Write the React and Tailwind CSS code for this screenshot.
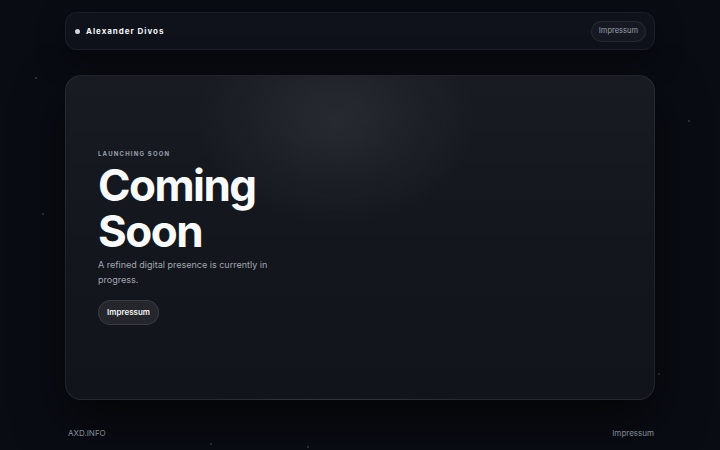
export default function App() {
  const specks = [
    [35, 77], [307, 446], [658, 373], [42, 213], [688, 120], [210, 443],
  ]
  return (
    <div className="relative w-[720px] h-[450px] overflow-hidden bg-[#090c13] text-white" style={{ fontFamily: 'Inter, "Noto Sans", sans-serif' }}>
      {specks.map(([x, y], i) => (
        <span key={i} className="absolute w-[2px] h-[2px] rounded-full bg-white/20" style={{ left: x, top: y }} />
      ))}

      <div className="relative flex flex-col px-[65px] pt-3">
        {/* Kopfzeile */}
        <header className="h-[38px] rounded-xl border border-white/[0.06] bg-[#0f121a] flex items-center justify-between pl-[9px] pr-2 shadow-[0_10px_30px_rgba(0,0,0,0.4)]">
          <div className="flex items-center gap-[6px]">
            <span className="w-[5px] h-[5px] rounded-full bg-gray-300" />
            <span className="text-[8px] font-bold tracking-[0.12em] text-gray-100">Alexander Divos</span>
          </div>
          <button className="h-[21px] px-[7px] rounded-full border border-white/[0.07] bg-white/[0.03] text-[7.5px] text-gray-400">
            Impressum
          </button>
        </header>

        {/* Hauptkarte */}
        <main className="relative mt-[25px] h-[325px] rounded-2xl border border-white/[0.07] overflow-hidden shadow-[0_20px_50px_rgba(0,0,0,0.6)]"
          style={{ background: 'radial-gradient(ellipse 200px 150px at 270px 45px, rgba(255,255,255,0.07), transparent 70%), linear-gradient(180deg, #181b22 0%, #13161d 55%, #11141b 100%)' }}>
          <div className="pl-8 pt-[74px]">
            <p className="text-[6px] leading-[8px] font-bold tracking-[0.2em] text-gray-400">LAUNCHING SOON</p>
            <h1 className="mt-[4px] text-[44px] leading-[46px] font-bold tracking-[-0.035em] text-gray-50">
              <span className="block">Coming</span>
              <span className="block">Soon</span>
            </h1>
            <p className="mt-[3px] w-[172px] text-[9px] leading-[15px] text-[#a3a7b0]">
              A refined digital presence is currently in progress.
            </p>
            <div className="mt-[10px]">
              <button className="h-[25px] px-[8px] rounded-full border border-white/10 bg-[#24262c] text-[8px] font-semibold text-gray-100">
                Impressum
              </button>
            </div>
          </div>
        </main>

        {/* Fußzeile */}
        <footer className="mt-[27px] flex items-center justify-between pl-[3px] pr-[1px] text-[8px] text-gray-400">
          <span>AXD.INFO</span>
          <span>Impressum</span>
        </footer>
      </div>
    </div>
  )
}
